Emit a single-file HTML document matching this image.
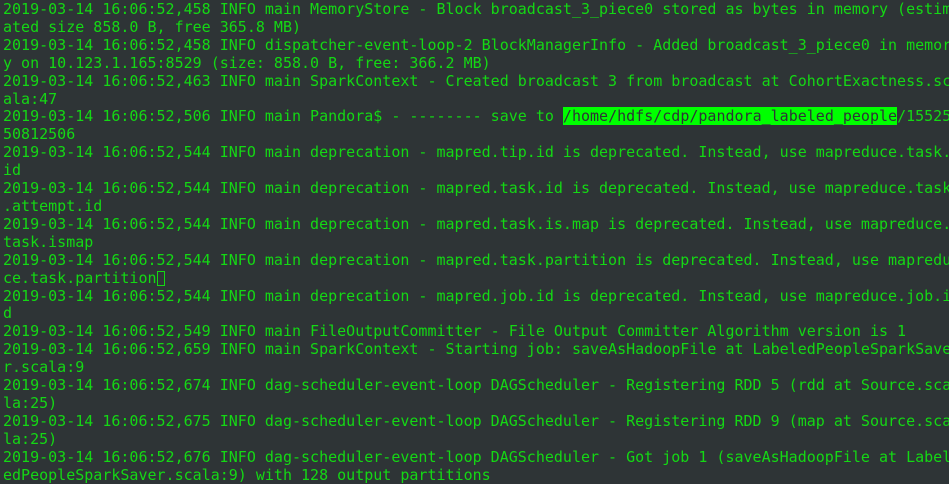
<!DOCTYPE html>
<html><head><meta charset="utf-8"><style>
html,body{margin:0;padding:0;background:#2e3436;width:949px;height:475px;overflow:hidden}
pre{margin:0;position:absolute;left:3px;top:1px;font-family:"DejaVu Sans Mono","Liberation Mono",monospace;font-size:15px;line-height:17.9px;color:#14d814;white-space:pre}
.hl{background:#00ff00;color:#2e3436}
.cur{display:inline-block;width:8px;height:15px;border:1px solid #14d814;vertical-align:-3px;box-sizing:border-box}
</style></head><body><pre>2019-03-14 16:06:52,458 INFO main MemoryStore - Block broadcast_3_piece0 stored as bytes in memory (estim
ated size 858.0 B, free 365.8 MB)
2019-03-14 16:06:52,458 INFO dispatcher-event-loop-2 BlockManagerInfo - Added broadcast_3_piece0 in memor
y on 10.123.1.165:8529 (size: 858.0 B, free: 366.2 MB)
2019-03-14 16:06:52,463 INFO main SparkContext - Created broadcast 3 from broadcast at CohortExactness.sc
ala:47
2019-03-14 16:06:52,506 INFO main Pandora$ - -------- save to <span class="hl">/home/hdfs/cdp/pandora_labeled_people</span>/15525
50812506
2019-03-14 16:06:52,544 INFO main deprecation - mapred.tip.id is deprecated. Instead, use mapreduce.task.
id
2019-03-14 16:06:52,544 INFO main deprecation - mapred.task.id is deprecated. Instead, use mapreduce.task
.attempt.id
2019-03-14 16:06:52,544 INFO main deprecation - mapred.task.is.map is deprecated. Instead, use mapreduce.
task.ismap
2019-03-14 16:06:52,544 INFO main deprecation - mapred.task.partition is deprecated. Instead, use mapredu
ce.task.partition<span class="cur"></span>
2019-03-14 16:06:52,544 INFO main deprecation - mapred.job.id is deprecated. Instead, use mapreduce.job.i
d
2019-03-14 16:06:52,549 INFO main FileOutputCommitter - File Output Committer Algorithm version is 1
2019-03-14 16:06:52,659 INFO main SparkContext - Starting job: saveAsHadoopFile at LabeledPeopleSparkSave
r.scala:9
2019-03-14 16:06:52,674 INFO dag-scheduler-event-loop DAGScheduler - Registering RDD 5 (rdd at Source.sca
la:25)
2019-03-14 16:06:52,675 INFO dag-scheduler-event-loop DAGScheduler - Registering RDD 9 (map at Source.sca
la:25)
2019-03-14 16:06:52,676 INFO dag-scheduler-event-loop DAGScheduler - Got job 1 (saveAsHadoopFile at Label
edPeopleSparkSaver.scala:9) with 128 output partitions</pre></body></html>
